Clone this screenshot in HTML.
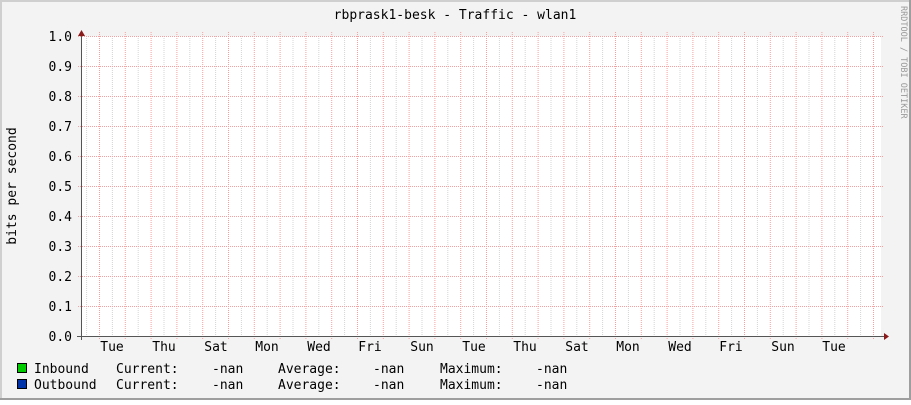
<!DOCTYPE html>
<html><head><meta charset="utf-8"><style>
html,body{margin:0;padding:0;}
body{width:911px;height:400px;overflow:hidden;}
svg text{font-family:"DejaVu Sans Mono","Liberation Mono",monospace;}
</style></head><body>
<svg width="911" height="400" xmlns="http://www.w3.org/2000/svg">
<defs>
<pattern id="vg" patternUnits="userSpaceOnUse" x="99" y="32" width="25.8" height="308">
<line x1="0.5" y1="0" x2="0.5" y2="308" stroke="#f4a0a0" stroke-dasharray="1,1"/>
<line x1="13.4" y1="4" x2="13.4" y2="306" stroke="#d4d4d4" stroke-dasharray="1,1"/>
</pattern>
<pattern id="hg" patternUnits="userSpaceOnUse" x="0" y="36" width="2" height="30">
<rect x="0" y="0" width="1" height="1" fill="#f4a0a0"/>
</pattern>
</defs>
<rect x="0" y="0" width="911" height="400" fill="#9e9e9e"/>
<rect x="0" y="0" width="909" height="398" fill="#cfcfcf"/>
<rect x="2" y="2" width="907" height="396" fill="#f3f3f3"/>
<rect x="81" y="36" width="800" height="300" fill="#ffffff"/>
<rect x="82" y="32" width="800" height="308" fill="url(#vg)"/>
<rect x="77" y="36" width="807" height="300" fill="url(#hg)"/>
<line x1="77" y1="336.5" x2="884" y2="336.5" stroke="#555"/>
<line x1="81.5" y1="32" x2="81.5" y2="340" stroke="#555"/>
<polygon points="884,333 889,336.5 884,340" fill="#8b1a1a"/>
<polygon points="78,36 81.5,30 85,36" fill="#8b1a1a"/>
<text x="455" y="19" font-size="13" text-anchor="middle" fill="#000">rbprask1-besk - Traffic - wlan1</text>
<text transform="translate(16,186) rotate(-90)" font-size="13" text-anchor="middle" fill="#000">bits per second</text>
<text transform="translate(901,6) rotate(90)" font-size="8.5" fill="#999">RRDTOOL / TOBI OETIKER</text>
<g font-size="13" text-anchor="end" fill="#000">
<text x="72" y="41">1.0</text><text x="72" y="71">0.9</text><text x="72" y="101">0.8</text><text x="72" y="131">0.7</text><text x="72" y="161">0.6</text><text x="72" y="191">0.5</text><text x="72" y="221">0.4</text><text x="72" y="251">0.3</text><text x="72" y="281">0.2</text><text x="72" y="311">0.1</text><text x="72" y="341">0.0</text>
</g>
<g font-size="13" text-anchor="middle" fill="#000">
<text x="112" y="351">Tue</text><text x="164" y="351">Thu</text><text x="216" y="351">Sat</text><text x="267" y="351">Mon</text><text x="319" y="351">Wed</text><text x="370" y="351">Fri</text><text x="422" y="351">Sun</text><text x="474" y="351">Tue</text><text x="525" y="351">Thu</text><text x="577" y="351">Sat</text><text x="628" y="351">Mon</text><text x="680" y="351">Wed</text><text x="731" y="351">Fri</text><text x="783" y="351">Sun</text><text x="834" y="351">Tue</text>
</g>
<rect x="17.5" y="363.5" width="9" height="9" fill="#00cc00" stroke="#000"/>
<rect x="17.5" y="379.5" width="9" height="9" fill="#0033aa" stroke="#000"/>
<g font-size="13" fill="#000">
<text x="34" y="373">Inbound</text><text x="116" y="373">Current:</text><text x="212" y="373">-nan</text><text x="278" y="373">Average:</text><text x="373" y="373">-nan</text><text x="440" y="373">Maximum:</text><text x="536" y="373">-nan</text>
<text x="34" y="389">Outbound</text><text x="116" y="389">Current:</text><text x="212" y="389">-nan</text><text x="278" y="389">Average:</text><text x="373" y="389">-nan</text><text x="440" y="389">Maximum:</text><text x="536" y="389">-nan</text>
</g>
</svg>
</body></html>
